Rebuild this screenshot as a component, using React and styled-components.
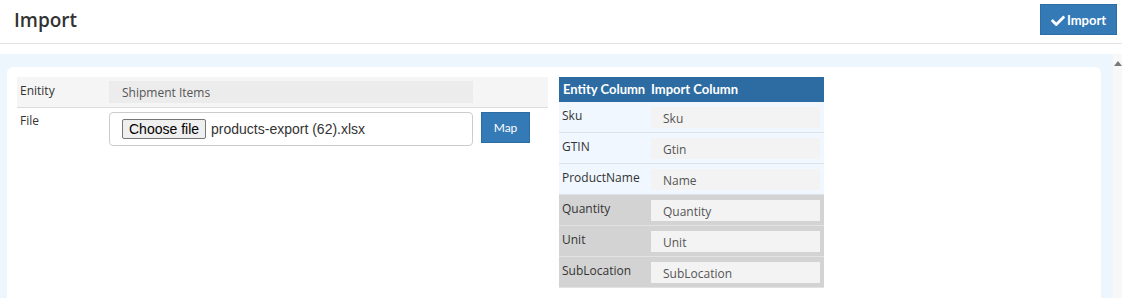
import styled, { createGlobalStyle } from "styled-components";

const GlobalStyle = createGlobalStyle`
  html, body {
    margin: 0;
    padding: 0;
    background: #fff;
    font-family: "Open Sans", "Noto Sans", sans-serif;
    color: #333;
  }
  * { box-sizing: border-box; }
`;

const Page = styled.div`
  width: 1122px;
  height: 298px;
  overflow: hidden;
  display: flex;
  flex-direction: column;
`;

const Header = styled.header`
  height: 44px;
  flex: none;
  display: flex;
  align-items: center;
  justify-content: space-between;
  padding: 0 5px 4px 14px;
  border-bottom: 1px solid #e3e3e3;
`;

const Title = styled.h1`
  margin: 0;
  font-size: 19px;
  font-weight: 600;
  color: #333;
`;

const Button = styled.button`
  display: inline-flex;
  align-items: center;
  justify-content: center;
  gap: 2px;
  height: ${(p) => p.h || 31}px;
  width: ${(p) => p.w}px;
  padding: 0;
  border: 1px solid #2e6da4;
  border-radius: 0;
  background: #337ab7;
  color: #fff;
  font-family: Lato, sans-serif;
  font-size: ${(p) => p.fs || 12}px;
  font-weight: ${(p) => p.weight || 700};
  cursor: pointer;
`;

const Body = styled.div`
  flex: 1;
  display: flex;
  margin-top: 10px;
  min-height: 0;
`;

const Content = styled.div`
  flex: 1;
  background: #eef6fd;
  padding: 13px 12px 0 7px;
`;

const Scrollbar = styled.div`
  width: 9px;
  flex: none;
  background: #f8f8f8;
  display: flex;
  justify-content: center;
  padding-top: 7px;

  &::before {
    content: "";
    width: 0;
    height: 0;
    border-left: 4px solid transparent;
    border-right: 4px solid transparent;
    border-bottom: 5px solid #7a7a7a;
  }
`;

const Card = styled.div`
  background: #fff;
  border-radius: 6px 6px 0 0;
  height: 100%;
  padding: 10px 10px;
  display: flex;
  align-items: flex-start;
  gap: 11px;
`;

const FormTable = styled.div`
  width: 531px;
  display: flex;
  flex-direction: column;
`;

const FormRow = styled.div`
  display: flex;
  align-items: flex-start;
  height: ${(p) => p.h}px;
  padding-top: 4px;
  background: ${(p) => p.bg || "#fff"};
  border-bottom: ${(p) => (p.line ? "1px solid #dcdcdc" : "none")};
`;

const Label = styled.div`
  width: 92px;
  flex: none;
  padding: ${(p) => p.pt || 0}px 0 0 3px;
  font-size: 12px;
  color: #333;
  white-space: nowrap;
`;

const ReadOnly = styled.div`
  width: ${(p) => p.w}px;
  height: ${(p) => p.h || 22}px;
  background: ${(p) => p.bg || "#ececec"};
  color: #555;
  font-size: 12px;
  padding: 3px 0 0 ${(p) => p.pl || 13}px;
  line-height: 17px;
`;

const FileBox = styled.div`
  width: 364px;
  height: 34px;
  border: 1px solid #cccccc;
  border-radius: 4px;
  display: flex;
  align-items: center;
  padding-left: 12px;
  gap: 5px;
  font-family: "Liberation Sans", Arial, sans-serif;
  font-size: 14px;
  color: #333;
`;

const ChooseButton = styled.span`
  display: inline-flex;
  align-items: center;
  height: 20px;
  padding: 0 6px;
  border: 1px solid #767676;
  border-radius: 2px;
  background: #efefef;
  color: #000;
  font-size: 14px;
`;

const MapCell = styled.div`
  margin-left: 8px;
`;

const MapTable = styled.div`
  width: 265px;
  display: flex;
  flex-direction: column;
`;

const HeadRow = styled.div`
  height: 25px;
  display: flex;
  align-items: center;
  background: #2d6ca2;
  color: #fff;
  font-family: Lato, sans-serif;
  font-size: 13px;
  font-weight: 700;
  white-space: nowrap;
`;

const HeadCell = styled.div`
  width: ${(p) => p.w}px;
  padding-left: ${(p) => p.pl}px;
  padding-bottom: 1px;
`;

const MapRow = styled.div`
  height: 31px;
  display: flex;
  align-items: flex-start;
  padding-top: 5px;
  background: ${(p) => (p.required ? "#f0f7fe" : "#d3d3d3")};
  border-bottom: 1px solid ${(p) => (p.required ? "#dbe3ea" : "#e2e2e2")};
`;

const CheckIcon = () => (
  <svg width="14" height="12" viewBox="0 0 512 440" aria-hidden="true">
    <path
      fill="#fff"
      d="M173.9 439.4l-166.4-166.4c-10-10-10-26.2 0-36.2l36.2-36.2c10-10 26.2-10 36.2 0L192 312.7 432.1 72.6c10-10 26.2-10 36.2 0l36.2 36.2c10 10 10 26.2 0 36.2l-294.4 294.4c-10 10-26.2 10-36.2 0z"
    />
  </svg>
);

const columns = [
  { name: "Sku", value: "Sku", required: true },
  { name: "GTIN", value: "Gtin", required: true },
  { name: "ProductName", value: "Name", required: true },
  { name: "Quantity", value: "Quantity" },
  { name: "Unit", value: "Unit" },
  { name: "SubLocation", value: "SubLocation" },
];

const App = () => {
  return (
    <Page>
      <GlobalStyle />
      <Header>
        <Title>Import</Title>
        <Button w={77} h={31} fs={13}>
          <CheckIcon />
          Import
        </Button>
      </Header>
      <Body>
        <Content>
          <Card>
            <FormTable>
              <FormRow h={31} bg="#f5f5f5" line>
                <Label pt={1}>Enitity</Label>
                <ReadOnly w={364}>Shipment Items</ReadOnly>
              </FormRow>
              <FormRow h={60}>
                <Label>File</Label>
                <FileBox>
                  <ChooseButton>Choose file</ChooseButton>
                  products-export (62).xlsx
                </FileBox>
                <MapCell>
                  <Button w={49} h={31} weight={400}>
                    Map
                  </Button>
                </MapCell>
              </FormRow>
            </FormTable>
            <MapTable>
              <HeadRow>
                <HeadCell w={92} pl={4}>Entity Column</HeadCell>
                <HeadCell w={173} pl={0}>Import Column</HeadCell>
              </HeadRow>
              {columns.map((c) => (
                <MapRow key={c.name} required={c.required}>
                  <Label>{c.name}</Label>
                  <ReadOnly w={169} h={21} bg="#f3f3f3" pl={12}>
                    {c.value}
                  </ReadOnly>
                </MapRow>
              ))}
            </MapTable>
          </Card>
        </Content>
        <Scrollbar />
      </Body>
    </Page>
  );
};

export default App;
